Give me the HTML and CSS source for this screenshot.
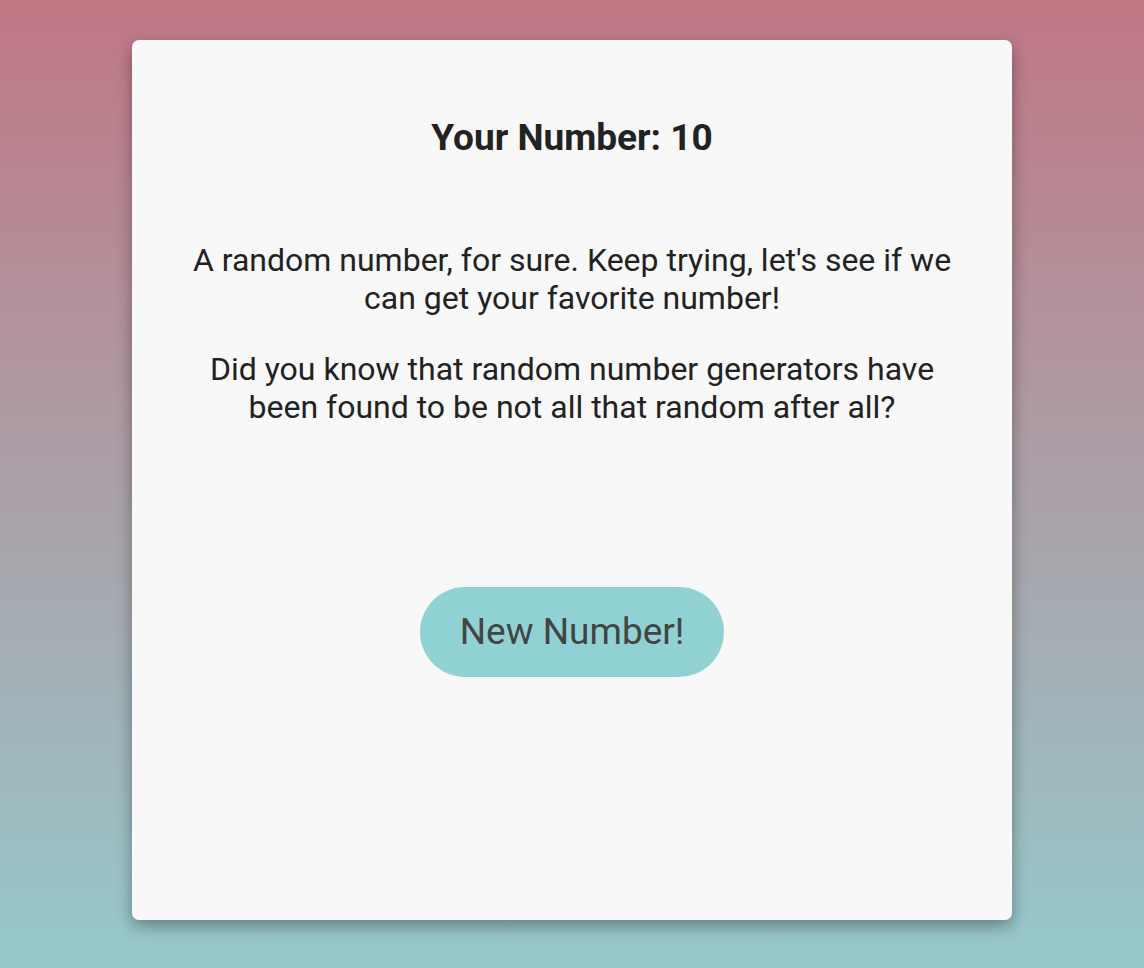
FILE: index.html
```html
<!DOCTYPE html>
<html>
<head>
<meta charset="utf-8">
<link rel="stylesheet" href="styles.css">
</head>
<body>
<main class="card">
  <h1 class="title">Your Number: 10</h1>
  <div class="message">
    <p>A random number, for sure. Keep trying, let's see if we can get your favorite number!</p>
    <p>Did you know that random number generators have been found to be not all that random after all?</p>
  </div>
  <button class="btn">New Number!</button>
</main>
</body>
</html>
```
FILE: styles.css
```css
html, body {
  margin: 0;
  padding: 0;
}
body {
  width: 1144px;
  height: 968px;
  background: linear-gradient(to bottom, #c07784 0%, #96c9cc 100%);
  font-family: Roboto, "Liberation Sans", sans-serif;
  display: flex;
  justify-content: center;
  align-items: flex-start;
  padding-top: 40px;
  box-sizing: border-box;
}
.card {
  width: 880px;
  height: 880px;
  background: #f8f8f8;
  border-radius: 7px;
  box-shadow: 0 6px 16px rgba(0, 0, 0, 0.35);
  display: flex;
  flex-direction: column;
  align-items: center;
  padding-top: 76px;
  box-sizing: border-box;
}
.title {
  margin: 0;
  font-size: 37px;
  line-height: 44px;
  font-weight: 700;
  color: #222;
}
.message {
  width: 780px;
  margin-top: 81px;
  text-align: center;
  color: #222;
  font-size: 32px;
  line-height: 38.4px;
}
.message p {
  margin: 0 0 32px;
}
.message p:last-child {
  margin-bottom: 0;
}
.btn {
  margin-top: 160px;
  width: 304px;
  height: 90px;
  border: none;
  border-radius: 45px;
  background: #90d2d4;
  color: #444;
  font-family: Roboto, "Liberation Sans", sans-serif;
  font-size: 37px;
  padding: 0;
}
```
